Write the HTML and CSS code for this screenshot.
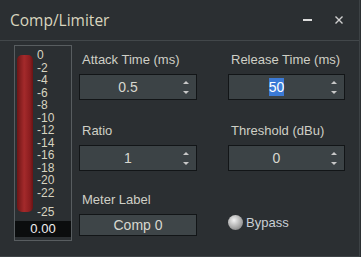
FILE: index.html
```html
<!DOCTYPE html>
<html>
<head>
    <title>Comp/Limiter</title>
    <meta name="viewport" content="width=device-width, initial-scale=1.0">
    <link rel="stylesheet" href="styles.css">
</head>
<body>
    <div class="window">
        <div class="titlebar">
            <span class="title">Comp/Limiter</span>
            <div class="title-buttons">
                <span class="btn-min"></span>
                <svg class="btn-close" width="8" height="8" viewBox="0 0 8 8">
                    <path d="M0.5 0.5L7.5 7.5M7.5 0.5L0.5 7.5" stroke="#d0d0d0" stroke-width="1.4"/>
                </svg>
            </div>
        </div>

        <div class="content">
            <div class="meter">
                <div class="meter-body">
                    <div class="meter-bar"></div>
                    <div class="meter-scale">
                        <span>0</span>
                        <span>-2</span>
                        <span>-4</span>
                        <span>-6</span>
                        <span>-8</span>
                        <span>-10</span>
                        <span>-12</span>
                        <span>-14</span>
                        <span>-16</span>
                        <span>-18</span>
                        <span>-20</span>
                        <span>-22</span>
                        <span class="scale-last">-25</span>
                    </div>
                </div>
                <div class="meter-value">0.00</div>
            </div>

            <div class="fields">
                <div class="field">
                    <label class="field-label">Attack Time (ms)</label>
                    <div class="spinbox">
                        <span class="spin-value">0.5</span>
                        <span class="spin-arrows"><i class="up"></i><i class="down"></i></span>
                    </div>
                </div>
                <div class="field">
                    <label class="field-label">Release Time (ms)</label>
                    <div class="spinbox">
                        <span class="spin-value"><span class="selected">50</span></span>
                        <span class="spin-arrows"><i class="up"></i><i class="down"></i></span>
                    </div>
                </div>
                <div class="field">
                    <label class="field-label">Ratio</label>
                    <div class="spinbox">
                        <span class="spin-value">1</span>
                        <span class="spin-arrows"><i class="up"></i><i class="down"></i></span>
                    </div>
                </div>
                <div class="field">
                    <label class="field-label">Threshold (dBu)</label>
                    <div class="spinbox">
                        <span class="spin-value">0</span>
                        <span class="spin-arrows"><i class="up"></i><i class="down"></i></span>
                    </div>
                </div>
                <div class="field field-last">
                    <label class="field-label">Meter Label</label>
                    <div class="textbox">Comp 0</div>
                </div>
                <div class="bypass">
                    <span class="led"></span>
                    <span class="bypass-text">Bypass</span>
                </div>
            </div>
        </div>
    </div>
</body>
</html>
```

FILE: styles.css
```css
:root {
    --bg: #2b2f32;
    --border: #3d4245;
    --input: #3c4346;
    --text: #cfcfc6;
    --title: #d9d5bf;
}

body {
    margin: 0;
    background: var(--bg);
    font-family: 'Liberation Sans', Arial, sans-serif;
    color: var(--text);
}

.window {
    width: 359px;
    height: 256px;
    border-right: 1px solid var(--border);
    border-bottom: 1px solid var(--border);
    background: var(--bg);
}

.titlebar {
    height: 40px;
    border-bottom: 1px solid #42474a;
    display: flex;
    align-items: center;
    justify-content: space-between;
    padding: 0 16px 0 10px;
}

.title {
    font-family: 'Open Sans', sans-serif;
    font-size: 15.5px;
    color: var(--title);
    margin-top: -1px;
}

.title-buttons {
    display: flex;
    align-items: center;
    gap: 23px;
}

.btn-min {
    width: 9px;
    height: 2px;
    background: #dcdcdc;
}

.btn-close {
    display: block;
}

.content {
    display: flex;
    padding: 4px 0 0 14px;
}

/* level meter */
.meter {
    width: 56px;
    height: 194px;
    border: 1px solid #585d60;
    display: flex;
    flex-direction: column;
}

.meter-body {
    flex: 1;
    display: flex;
    padding: 9px 0 0 2px;
}

.meter-bar {
    width: 16px;
    height: 157px;
    border-radius: 5px;
    background: linear-gradient(90deg, #6e1516, #a42a2b 45%, #8c1e20 80%, #6a1314);
}

.meter-scale {
    display: flex;
    flex-direction: column;
    margin: -6px 0 0 4px;
    font-size: 12px;
    color: #d8d4c0;
}

.meter-scale span {
    height: 12.55px;
    line-height: 12.55px;
}

.meter-scale .scale-last {
    margin-top: 6px;
}

.meter-value {
    height: 16px;
    margin-bottom: 3px;
    background: #0b0d0e;
    color: #f0f0f0;
    font-size: 13px;
    line-height: 16px;
    text-align: center;
}

/* controls */
.fields {
    display: grid;
    grid-template-columns: 118px 117px;
    column-gap: 31px;
    row-gap: 16px;
    margin: 5px 0 0 7px;
}

.field {
    display: flex;
    flex-direction: column;
}

.field-label {
    height: 20px;
    line-height: 20px;
    font-size: 13px;
    padding-left: 3px;
    margin-bottom: 4px;
    color: var(--text);
    white-space: nowrap;
}

.field-last {
    margin-top: -2px;
}

.spinbox {
    height: 26px;
    box-sizing: border-box;
    background: var(--input);
    border: 1px solid #121517;
    display: flex;
    align-items: center;
}

.spin-value {
    flex: 1;
    text-align: center;
    font-size: 14px;
    color: #d8d8d0;
}

.selected {
    background: #3b7ad6;
    color: #ffffff;
    padding: 1px 0;
}

.spin-arrows {
    width: 20px;
    height: 100%;
    display: flex;
    flex-direction: column;
    align-items: center;
    justify-content: space-between;
    padding: 6px 0 5px;
    box-sizing: border-box;
}

.spin-arrows i {
    width: 0;
    height: 0;
    border-left: 3px solid transparent;
    border-right: 3px solid transparent;
}

.spin-arrows .up {
    border-bottom: 3px solid #c8c8c8;
}

.spin-arrows .down {
    border-top: 3px solid #c8c8c8;
}

.textbox {
    height: 22px;
    box-sizing: border-box;
    background: #3e4548;
    border: 1px solid #121517;
    text-align: center;
    font-size: 14px;
    line-height: 20px;
    color: #d8d8d0;
}

.bypass {
    align-self: end;
    display: flex;
    align-items: center;
    gap: 3px;
    height: 22px;
    margin-bottom: 8px;
}

.led {
    width: 15px;
    height: 15px;
    border-radius: 50%;
    background: radial-gradient(circle at 40% 35%, #f2f2f2, #a9a9a9 55%, #6e6e6e);
}

.bypass-text {
    font-size: 13px;
    color: #c9d0d6;
}
```
